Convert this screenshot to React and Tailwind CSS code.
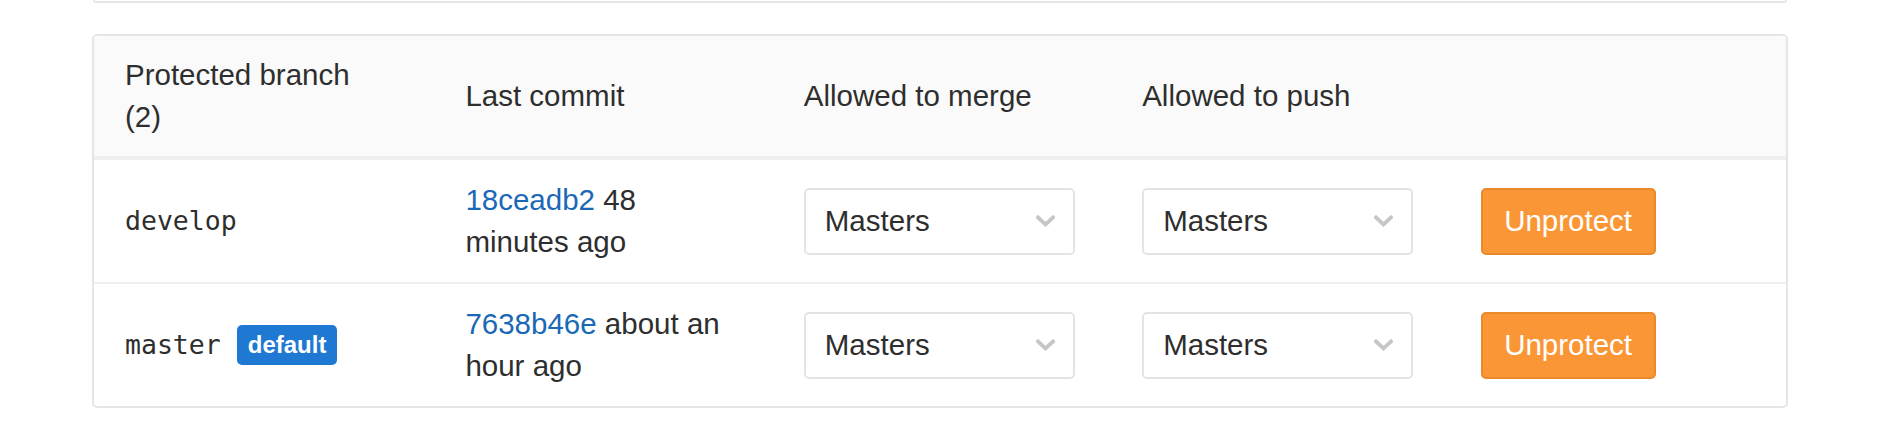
import React from 'react';

const branches = [
  { name: 'develop', sha: '18ceadb2', time: '48 minutes ago', isDefault: false },
  { name: 'master', sha: '7638b46e', time: 'about an hour ago', isDefault: true },
];

const headers = ['Protected branch', 'Last commit', 'Allowed to merge', 'Allowed to push', ''];

const Chevron = () => (
  <svg width="19" height="12" viewBox="0 0 19 12" className="shrink-0">
    <path d="M2 2.5 L9.5 9.5 L17 2.5" fill="none" stroke="#c6c6c6" strokeWidth="3.8" strokeLinecap="square" />
  </svg>
);

const AccessSelect = ({ value }) => (
  <div className="flex h-[67px] w-[271px] items-center justify-between rounded-[5px] border-2 border-[#e4e4e4] bg-white pl-[19px] pr-[18px]">
    <span>{value}</span>
    <Chevron />
  </div>
);

const Cell = ({ children, className = 'px-[33px]' }) => (
  <div className={`flex min-w-0 items-center ${className}`}>{children}</div>
);

export default function App() {
  return (
    <div
      className="min-h-[432px] bg-white text-[29.5px] leading-[42px] text-[#2e2e2e]"
      style={{ fontFamily: '"Liberation Sans", Arial, sans-serif' }}
    >
      {/* tail of the panel above */}
      <div className="ml-[93px] h-[3px] w-[1694px] rounded-b-[5px] border-x-2 border-b-2 border-[#e5e5e5]" />

      <div className="ml-[92px] mt-[31px] w-[1696px] overflow-hidden rounded-[5px] border-2 border-[#e5e5e5]">
        {/* header */}
        <div className="grid grid-cols-5 border-b-4 border-[#efefef] bg-[#fafafa] py-[18px]">
          <Cell className="pl-[31px] pr-[33px]">
            <span>
              Protected branch
              <br />
              (2)
            </span>
          </Cell>
          {headers.slice(1).map((h, i) => (
            <Cell key={i}>{h}</Cell>
          ))}
        </div>

        {/* rows */}
        {branches.map((b, i) => (
          <div
            key={b.name}
            className={`grid grid-cols-5 py-[19px] ${i > 0 ? 'border-t-2 border-[#efefef]' : ''}`}
          >
            <Cell className="pl-[31px] pr-[33px]">
              <span
                className="text-[26.5px]"
                style={{ fontFamily: '"DejaVu Sans Mono", "Liberation Mono", monospace' }}
              >
                {b.name}
              </span>
              {b.isDefault && (
                <span className="ml-[16px] flex h-[40px] items-center rounded-[5px] bg-[#1f78d1] px-[11px] text-[24px] font-bold text-white">
                  default
                </span>
              )}
            </Cell>
            <Cell>
              <span>
                <a className="text-[#1b69b6]">{b.sha}</a> {b.time}
              </span>
            </Cell>
            <Cell>
              <AccessSelect value="Masters" />
            </Cell>
            <Cell>
              <AccessSelect value="Masters" />
            </Cell>
            <Cell>
              <button className="flex h-[67px] w-[175px] items-center justify-center rounded-[5px] border-2 border-[#e8892c] bg-[#fb9636] text-white">
                Unprotect
              </button>
            </Cell>
          </div>
        ))}
      </div>
    </div>
  );
}
